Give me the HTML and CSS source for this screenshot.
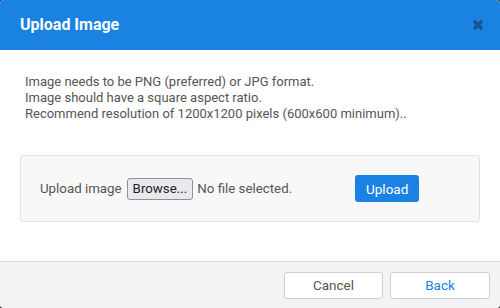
FILE: index.html
```html
<!DOCTYPE html>
<html>
<head>
<meta charset="utf-8">
<link rel="stylesheet" href="styles.css">
</head>
<body>
<div class="dialog">
  <div class="header">
    <div class="title">Upload Image</div>
    <svg class="close" width="12" height="12" viewBox="0 0 12 12"><path d="M2 2 L10 10 M10 2 L2 10" stroke="#1d5187" stroke-width="3.2" stroke-linecap="butt"/></svg>
  </div>
  <div class="body">
    <p class="info">Image needs to be PNG (preferred) or JPG format.<br>Image should have a square aspect ratio.<br>Recommend resolution of 1200x1200 pixels (600x600 minimum)..</p>
    <div class="panel">
      <span class="label">Upload image</span>
      <span class="browse">Browse...</span>
      <span class="nofile">No file selected.</span>
      <span class="upload">Upload</span>
    </div>
  </div>
  <div class="footer">
    <span class="btn cancel">Cancel</span>
    <span class="btn back">Back</span>
  </div>
</div>
</body>
</html>
```
FILE: styles.css
```css
html, body { margin: 0; padding: 0; background: #3a3a3a; }
body { width: 500px; height: 308px; font-family: Roboto, "Liberation Sans", sans-serif; }
.dialog { width: 500px; height: 308px; background: #fff; border-radius: 4px; overflow: hidden; display: flex; flex-direction: column; }
.header { height: 50px; background: #1a82e2; display: flex; align-items: center; justify-content: space-between; padding: 0 16px 0 20px; box-sizing: border-box; }
.title { color: #fff; font-weight: bold; font-size: 16px; margin-top: -1px; }
.close { margin-right: 0; margin-top: -1px; }
.body { flex: 1; padding: 24px 20px 0 20px; }
.info { margin: 0 0 0 5px; font-size: 13px; line-height: 16px; color: #555; }
.panel { margin-top: 33px; height: 67px; box-sizing: border-box; background: #f8f8f9; border: 1px solid #e3e3e5; border-radius: 3px; display: flex; align-items: center; padding: 0 19px; font-size: 13.3px; color: #555; }
.label { margin-right: 5px; }
.browse { display: inline-flex; align-items: center; height: 22px; box-sizing: border-box; padding: 0 5px; border: 1px solid #8f8f9d; border-radius: 3px; background: #e9e9ed; color: #222; font-size: 13.3px; }
.nofile { margin-left: 4px; }
.upload { margin-left: 63px; display: inline-flex; align-items: center; justify-content: center; width: 64px; height: 27px; background: #1a82e2; color: #fff; border-radius: 3px; font-size: 13.5px; }
.footer { height: 46px; background: #f3f3f5; border-top: 1px solid #d9d9db; display: flex; justify-content: flex-end; align-items: center; gap: 7px; padding: 0 10px; }
.btn { display: inline-flex; align-items: center; justify-content: center; width: 99px; height: 27px; box-sizing: border-box; background: #fff; border: 1px solid #cfcfd2; border-radius: 3px; font-size: 13.5px; }
.cancel { color: #555; }
.back { color: #1a82e2; width: 100px; }
```
